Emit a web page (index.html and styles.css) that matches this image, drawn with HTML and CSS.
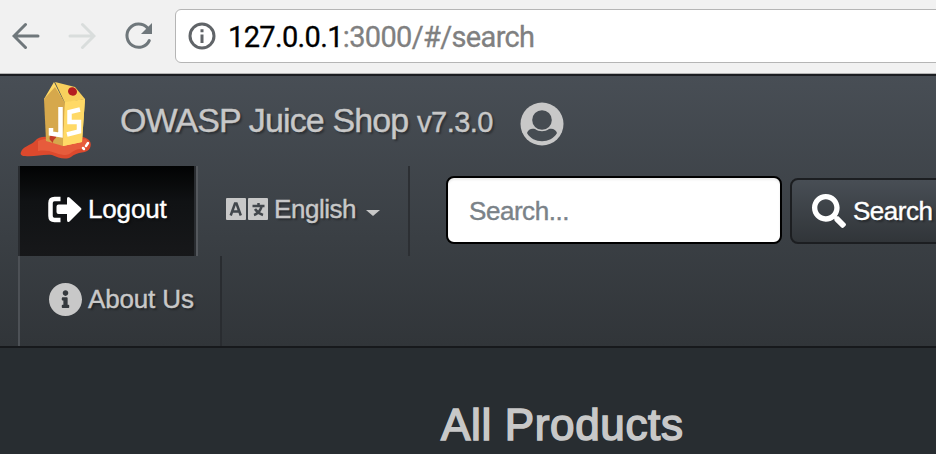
FILE: index.html
```html
<!DOCTYPE html>
<html lang="en">
<head>
<meta charset="utf-8">
<title>OWASP Juice Shop</title>
<link rel="stylesheet" href="styles.css">
</head>
<body>
<div class="toolbar">
  <svg class="tool back" viewBox="0 0 28 28"><path d="M26 14H2.5M13.5 2.5L2 14l11.500 11.500"/></svg>
  <svg class="tool forward" viewBox="0 0 28 28"><path d="M2 14h23.500M14.500 2.500L26 14L14.500 25.500"/></svg>
  <svg class="tool reload" viewBox="0 0 28 28"><path d="M25.300 18.500A11.700 11.700 0 1 1 23.200 5.600"/><path class="solid" d="M28 1v11h-11z"/></svg>
  <div class="address">
    <svg class="site-info" viewBox="0 0 28 28"><circle cx="14" cy="14" r="12"/><path d="M14 12.500v8.500M14 7.300v3"/></svg>
    <span class="url"><span class="host">127.0.0.1</span>:3000/#/search</span>
  </div>
</div>
<nav class="navbar">
  <div class="brand-row">
    <svg class="logo" viewBox="0 0 72 80">
      <path fill="#dc492d" d="M1 71C3 65 10 65 15 60C19 55 25 55 35 57L56 56C67 55 73 60 70 67C68 73 57 70 51 76C46 79 38 77 32 74C24 73 14 76 5 75C1 75 0 73 1 71Z"/>
      <path fill="#ec6745" d="M18 60C28 55 48 59 66 58C70 63 67 68 60 68C53 68 50 75 44 74C35 73 30 68 18 70Z" opacity=".65"/>
      <path fill="#ffd966" d="M24 18L34 1L45 23L65 18L62 61L43 65Z"/>
      <path fill="#d6a84c" d="M24 18L35 6L45 22L43 65L26 60Z"/>
      <path fill="#f8d05d" d="M35 1L55 6L65 18L45 22Z"/>
      <path fill="#ffd966" d="M45 21L65 18L62 61L43 65Z"/>
      <path fill="#b51e20" d="M48 10c1-6 9-4 9 1c0 5-9 5-9-1z"/>
      <path fill="#c43b26" d="M30 59c-2-5 4-8 6-4c1 3-3 2-3 7z"/>
      <path class="letters" d="M40.500 26V54L31 52.500V47M60 28.500L49.500 31V41L59 41V50.500L47 53.500"/>
      <path class="shine" d="M68 62l-2 3M63 67l1 1"/>
    </svg>
    <span class="brand">OWASP Juice Shop</span><span class="version">v7.3.0</span>
    <svg class="user" viewBox="0 0 44 44"><circle cx="22" cy="22" r="21.500" fill="#c8c8c8"/><circle cx="22" cy="18" r="9.800" fill="#464c52"/><path fill="#464c52" d="M7 31C8 27 12 26 15 27C19 30 25 30 29 27C33 26 36 28 37 31C31 42 13 42 7 31Z"/></svg>
  </div>
  <div class="nav-row">
    <a class="item active"><svg class="exit" viewBox="0 0 34 27"><path class="bracket" d="M12.500 3H6.500Q2.500 3 2.500 7V20Q2.500 24 6.500 24H12.500"/><path d="M8.500 10.500Q8.500 8.500 10.500 8.500H19V3Q19 0 21.500 1.500L33 12Q34 13 33 14L21.500 25.500Q19 27 19 24V18H10.500Q8.500 18 8.500 16Z"/></svg><span class="t-logout">Logout</span></a>
    <a class="item language"><svg class="lang" viewBox="0 0 42 22"><rect width="20" height="22" rx="1"/><rect x="22" width="20" height="22" rx="1"/><g class="cut"><path d="M4.700 17.500L9 5.500H10.500L14.800 17.500M6.500 13.500H13"/><path d="M26.500 8H38.500M32.500 5v3M29 11C31 14 34 16 37 17M35.500 9C34 13 31 16 28 17"/></g></svg><span class="t-english">English</span><i class="caret"></i></a>
    <form class="search"><input type="text" placeholder="Search..." aria-label="Search"><button type="button"><svg class="glass" viewBox="0 0 512 512"><path d="M505 442.700L405.300 343c-4.500-4.500-10.600-7-17-7H372c27.600-35.300 44-79.700 44-128C416 93.100 322.900 0 208 0S0 93.100 0 208s93.100 208 208 208c48.300 0 92.700-16.400 128-44v16.300c0 6.400 2.500 12.500 7 17l99.700 99.700c9.400 9.400 24.600 9.400 33.900 0l28.300-28.300c9.400-9.400 9.400-24.600.1-34zM208 336c-70.700 0-128-57.200-128-128 0-70.700 57.200-128 128-128 70.700 0 128 57.200 128 128 0 70.700-57.200 128-128 128z"/></svg><span class="t-search">Search</span></button></form>
  </div>
  <div class="nav-row">
    <a class="item about"><svg class="info" viewBox="8 8 496 496"><path d="M256 8C119 8 8 119.100 8 256c0 137 111 248 248 248s248-111 248-248C504 119.100 393 8 256 8zm0 110c23.200 0 42 18.800 42 42s-18.800 42-42 42-42-18.800-42-42 18.800-42 42-42zm56 254c0 6.600-5.400 12-12 12h-88c-6.600 0-12-5.400-12-12v-24c0-6.600 5.400-12 12-12h12v-64h-12c-6.600 0-12-5.400-12-12v-24c0-6.600 5.400-12 12-12h64c6.600 0 12 5.400 12 12v100h12c6.600 0 12 5.400 12 12v24z"/></svg><span class="t-about">About Us</span></a>
  </div>
</nav>
<main><h1>All Products</h1></main>
</body>
</html>
```
FILE: styles.css
```css
* { box-sizing: border-box; }
body { margin: 0; width: 936px; height: 454px; overflow: hidden; background: #282d31; color: #c8c8c8; font-family: "Liberation Sans", Arial, sans-serif; }
svg { display: block; flex: none; }
.toolbar { height: 74px; display: flex; align-items: flex-start; background: #f1f1f1; border-bottom: 1px solid #b5b5b5; }
.tool { width: 28px; height: 28px; margin-top: 22px; fill: none; stroke: #6f777b; stroke-width: 3; }
.back { margin-left: 12px; stroke-linecap: round; }
.forward { margin-left: 28px; stroke: #d9dddc; stroke-linecap: round; }
.reload { margin-left: 28px; stroke-linecap: round; }
.tool .solid { fill: #6f777b; stroke: none; }
.address { margin: 9px 0 0 23px; width: 780px; height: 54px; flex: none; display: flex; align-items: center; border: 1px solid #b5b5b5; border-radius: 6px; background: #fff; }
.site-info { width: 28px; height: 28px; margin: 0 0 0 12px; fill: none; stroke: #606468; stroke-width: 3; }
.url { margin: 2px 0 0 12px; font: 29px/52px Roboto, sans-serif; letter-spacing: -.66px; color: #808080; white-space: nowrap; -webkit-text-stroke: .3px; }
.host { color: #000; }
.navbar { height: 274px; border-top: 2px solid #1c1e22; border-bottom: 2px solid #17191c; background: linear-gradient(#484e55, #3a3f44 60%, #313539); text-shadow: 2px 2px 2px rgba(0,0,0,.35); -webkit-text-stroke: .4px; }
.brand-row { height: 90px; display: flex; }
.logo { width: 72px; height: 80px; margin: 5px 0 0 20px; }
.letters { fill: none; stroke: #fff; stroke-width: 4.500; }
.shine { stroke: #fff; stroke-width: 2.500; stroke-linecap: round; }
.brand { width: 297px; margin-left: 28px; font-size: 34px; line-height: 89px; letter-spacing: -.88px; white-space: nowrap; }
.version { width: 84px; font-size: 29px; line-height: 92px; letter-spacing: -.5px; }
.user { width: 44px; height: 44px; margin: 26px 0 0 19px; }
.nav-row { height: 90px; display: flex; margin-left: 18px; font-size: 26px; letter-spacing: -.15px; white-space: nowrap; }
.item { height: 90px; flex: none; display: flex; align-items: center; padding-bottom: 4px; fill: #c8c8c8; }
.active { width: 180px; color: #fff; fill: #fff; border-left: 2px solid #292c30; border-right: 2px solid #54585d; padding-left: 28px; background: linear-gradient(90deg, transparent 174px, #292c30 174px), linear-gradient(#020303, #101214 40%, #17181a); }
.exit { width: 34px; height: 27px; }
.bracket { fill: none; stroke: #fff; stroke-width: 4.500; }
.t-logout { margin-left: 6px; }
.language { width: 212px; padding-left: 28px; border-right: 2px solid #2c2f33; }
.lang { width: 42px; height: 22px; }
.cut { fill: none; stroke: #42474c; stroke-width: 2.500; }
.t-english { width: 92px; margin-left: 6px; letter-spacing: -.45px; }
.caret { border: 7px solid transparent; border-top: 6px solid #c8c8c8; border-bottom: 0; margin-top: 7px; }
.search { flex: none; display: flex; margin: 10px 0 0 36px; }
.search input { width: 336px; height: 68px; flex: none; padding: 2px 21px 0; border: 2px solid #000; border-radius: 8px; background: #fff; box-shadow: inset 0 2px 2px rgba(0,0,0,.075); font: inherit; letter-spacing: -.45px; }
.search input::placeholder { color: #7a8288; opacity: 1; }
.search button { flex: none; display: flex; align-items: center; width: 174px; height: 66px; margin: 2px 0 0 8px; padding: 0 0 0 20px; border: 2px solid #1c1e21; border-radius: 8px; color: #fff; fill: #fff; background: linear-gradient(#484e55, #3a3f44 60%, #313539); font: inherit; letter-spacing: -.5px; text-shadow: inherit; }
.glass { width: 34px; height: 34px; }
.t-search { margin-left: 7px; }
.about { width: 204px; padding-left: 29px; border-left: 2px solid #4d5156; border-right: 2px solid #292c30; }
.info { width: 33px; height: 33px; }
.t-about { margin-left: 6px; }
main { display: flex; padding: 50px 0 0 441px; }
h1 { margin: 0; font-size: 44px; line-height: 54px; letter-spacing: .65px; font-weight: 400; -webkit-text-stroke: 1.600px #c8c8c8; white-space: nowrap; text-shadow: -1px -1px 0 rgba(0,0,0,.3); }
```
